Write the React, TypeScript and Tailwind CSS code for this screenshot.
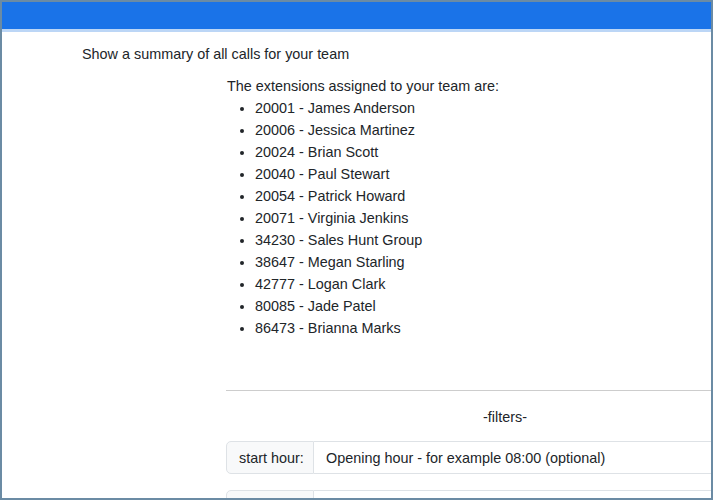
const extensions = [
  "20001 - James Anderson",
  "20006 - Jessica Martinez",
  "20024 - Brian Scott",
  "20040 - Paul Stewart",
  "20054 - Patrick Howard",
  "20071 - Virginia Jenkins",
  "34230 - Sales Hunt Group",
  "38647 - Megan Starling",
  "42777 - Logan Clark",
  "80085 - Jade Patel",
  "86473 - Brianna Marks",
];

export default function App() {
  return (
    <div
      className="w-[713px] h-[500px] border-2 border-[#6b8ba4] overflow-hidden flex flex-col bg-white text-[14.4px] leading-[22px] text-[#212529]"
      style={{ fontFamily: '"Liberation Sans", Arial, sans-serif' }}
    >
      <div className="h-[27px] shrink-0 bg-[#1a73e8]" />
      <div className="h-[3px] shrink-0 bg-[#bcd6f6]" />

      <div className="pt-[11px]">
        <p className="pl-[80px]">Show a summary of all calls for your team</p>

        <div className="ml-[224px] w-[558px] shrink-0 mt-[10px]">
          <p className="pl-px">The extensions assigned to your team are:</p>
          <ul className="list-disc pl-[29px]">
            {extensions.map((e) => (
              <li key={e}>{e}</li>
            ))}
          </ul>

          <hr className="mt-[51px] border-t border-[#cdcdcd]" />

          <p className="text-center mt-[15px]">-filters-</p>

          <div className="mt-[13px] flex flex-col gap-4">
            <div className="flex h-[33px]">
              <span className="w-[88px] shrink-0 flex items-center px-3 bg-[#f8f9fa] border border-[#dee2e6] rounded-l-[5px] whitespace-nowrap">
                start hour:
              </span>
              <div className="flex-1 flex items-center px-3 border border-l-0 border-[#dee2e6] rounded-r-[5px]">
                Opening hour - for example 08:00 (optional)
              </div>
            </div>
            <div className="flex h-[33px]">
              <span className="w-[88px] shrink-0 flex items-center px-3 bg-[#f8f9fa] border border-[#dee2e6] rounded-l-[5px] whitespace-nowrap">
                end hour:
              </span>
              <div className="flex-1 flex items-center px-3 border border-l-0 border-[#dee2e6] rounded-r-[5px]">
                Closing hour - for example 18:00 (optional)
              </div>
            </div>
          </div>
        </div>
      </div>
    </div>
  );
}
